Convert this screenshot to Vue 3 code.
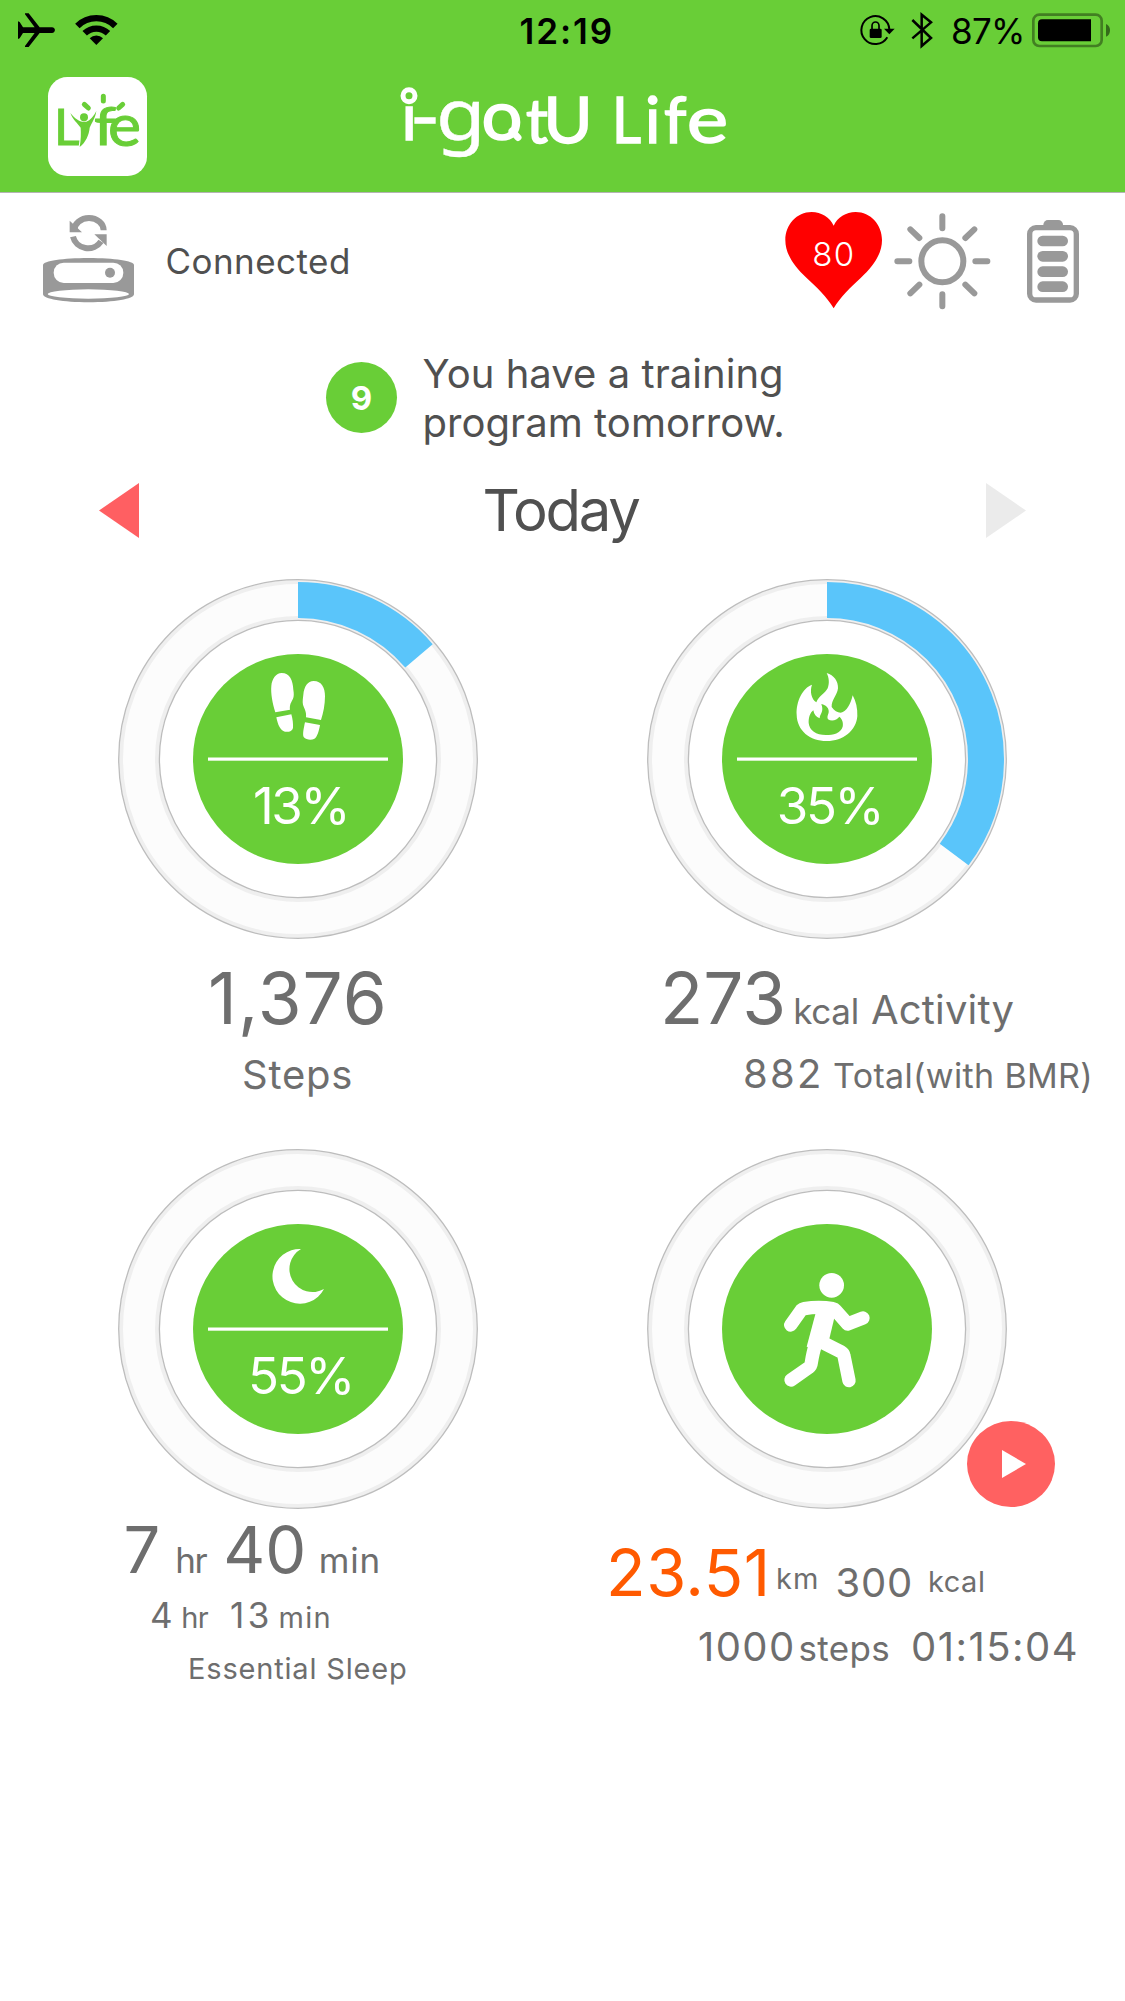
<template>
  <div class="app">
    <header class="header">
      <div class="status-bar">
        <div class="status-left">
          <svg class="plane" viewBox="54 38 112 104">
            <path d="M54 63l5 2 10 16h35L75 42v-3h11l33 42h37c12 0 12 17 0 17h-37l-33 42H75v-3l29-39H69l-10 16-5 2z" />
          </svg>
          <svg class="wifi" viewBox="224 42 128 94">
            <path d="M288 135l-20-20a28 28 0 0 1 40 0z" />
            <path class="line" stroke-width="19" d="M231 78a81 81 0 0 1 114 0M253 100a50 50 0 0 1 70 0" />
          </svg>
        </div>
        <span class="clock">12:19</span>
        <div class="status-right">
          <svg class="lock" viewBox="328 42 104 94">
            <path class="line" stroke-width="6" d="M410 112a42 42 0 1 1 6-24" />
            <path d="M400 86h32l-16 17z" />
            <rect x="357" y="86" width="36" height="28" rx="4" />
            <path class="line" stroke-width="5" d="M364 88V77a10.500 11 0 0 1 21 0v11" />
          </svg>
          <svg class="bluetooth" viewBox="484 34 68 114">
            <path class="line" stroke-width="7.500" d="M488 61l56 54-28 24V45l28 23-56 48" />
          </svg>
          <span class="charge">87%</span>
          <svg class="phone-battery" viewBox="846 38 236 104">
            <rect x="850" y="43" width="205" height="94" rx="18" class="line shade" stroke-width="8" />
            <path d="M876 57h147v66H876q-12 0-12-12V69q0-12 12-12z" />
            <path class="nub" d="M1068 71c16 6 16 32 0 38z" />
          </svg>
        </div>
      </div>

      <div class="title-bar">
        <svg class="app-icon" viewBox="144 231 297 297">
          <rect x="144" y="231" width="297" height="297" rx="58" fill="#fff" />
          <g class="app-icon-text">
            <text x="162" y="436" font-size="153">L</text>
            <text x="282" y="436" font-size="156" textLength="66" lengthAdjust="spacingAndGlyphs">f</text>
            <text x="324" y="438" font-size="172" textLength="99" lengthAdjust="spacingAndGlyphs">e</text>
          </g>
          <path
            class="person"
            d="M211 339c14 17 26 25 36 26h12c12-4 22-16 30-32-3 22-14 36-20 50-2 22-12 44-30 58 4-22 4-42 3-58-8-12-23-23-31-44z"
          />
          <circle cx="252" cy="352" r="12" fill="#69ce37" />
          <path class="rays" d="M310 289v14M253 313l12 11M368 313l-12 11" />
        </svg>

        <svg class="logo" viewBox="400 85 335 80">
          <text x="401.400" y="139.500">i</text>
          <text x="410.500" y="140" textLength="29" lengthAdjust="spacingAndGlyphs">-</text>
          <text class="round" x="436" y="140" textLength="49.600" lengthAdjust="spacingAndGlyphs">g</text>
          <text x="481.500" y="139.500" font-size="70" textLength="41" lengthAdjust="spacingAndGlyphs">o</text>
          <text x="526" y="142.500" font-size="61">t</text>
          <text x="543.500" y="142.500" textLength="49" lengthAdjust="spacingAndGlyphs">U</text>
          <text x="612" y="142.500" textLength="29" lengthAdjust="spacingAndGlyphs">L</text>
          <text x="645" y="142.500">i</text>
          <text x="664" y="142.500">f</text>
          <text x="687" y="142.500" font-size="66" textLength="41" lengthAdjust="spacingAndGlyphs">e</text>
          <circle class="ring-dot" cx="409" cy="95.800" r="6" />
          <path class="tail" d="M512 131l6 6.500" />
        </svg>
      </div>
    </header>

    <section class="device-row">
      <svg class="device" viewBox="129 60 273 276">
        <path class="arc" d="M223 106a43 36 0 0 1 88 0M219 125a46 44 0 0 0 84 14" />
        <path d="M209 77v35h37zM320 118h-37l37 35z" />
        <path d="M129 210c0-12 60-21 137-21s136 9 136 21v88c0 14-60 24-136 24s-137-10-137-24z" />
        <rect x="161" y="203" width="209" height="61" rx="30" fill="#fff" />
        <circle cx="330" cy="233" r="15" />
        <ellipse cx="265" cy="297" rx="122" ry="14" fill="#fff" />
      </svg>
      <span class="connection">Connected</span>

      <div class="indicators">
        <svg class="heart" viewBox="105 50 291 296">
          <path
            d="M251 91C262 66 288 50 317 50c45 0 79 38 79 84 0 42-26 78-64 114-30 28-60 56-81 91-21-35-51-63-81-91C132 212 106 176 106 134c0-46 34-84 79-84 29 0 55 16 66 41z"
          />
          <text x="187" y="212">80</text>
        </svg>
        <svg class="sun" viewBox="431 53 290 290">
          <circle cx="576" cy="198" r="63" />
          <path
            d="M576 63v36M576 297v36M441 198h36M675 198h36M480 102l27 26M672 102l-27 26M480 294l27-26M672 294l-27-26"
          />
        </svg>
        <svg class="device-battery" viewBox="832 74 156 248">
          <rect x="881" y="74" width="59" height="30" rx="14" />
          <rect x="840" y="97" width="140" height="217" rx="19" class="case" />
          <rect v-for="y in [121, 167, 213, 258]" :key="y" x="863" :y="y" width="92" height="32" rx="16" />
        </svg>
      </div>
    </section>

    <section class="notice">
      <span class="badge">9</span>
      <p class="message">You have a training<br />program tomorrow.</p>
    </section>

    <nav class="day-nav">
      <svg class="arrow" viewBox="0 0 40 55"><path d="M40 0v55L0 27.500z" fill="#ff5f62" /></svg>
      <span class="day">Today</span>
      <svg class="arrow" viewBox="0 0 40 55"><path d="M0 0v55l40-27.500z" fill="#ebebeb" /></svg>
    </nav>

    <main class="metrics">
      <article v-for="m in metrics" :key="m.name" class="metric" :class="m.name">
        <div class="dial-wrap">
          <svg class="dial" viewBox="0 0 360 360">
            <circle cx="180" cy="180" r="159" stroke="#fcfcfc" stroke-width="40" />
            <circle cx="180" cy="180" r="177" stroke="#efefef" stroke-width="4" />
            <circle cx="180" cy="180" r="141" stroke="#efefef" stroke-width="4" />
            <circle cx="180" cy="180" r="179.300" stroke="#bdbdbd" stroke-width="1.300" />
            <circle cx="180" cy="180" r="138.600" stroke="#bdbdbd" stroke-width="1.300" />
            <circle
              v-if="m.progress"
              cx="180"
              cy="180"
              r="159"
              stroke="#5ac5fa"
              stroke-width="36"
              pathLength="100"
              :stroke-dasharray="`${m.progress} 100`"
              transform="rotate(-90 180 180)"
            />
            <circle cx="180" cy="180" r="105" class="core" />

            <g v-if="m.name === 'steps'" class="glyph" transform="translate(-18 -19) scale(.33333)">
              <path
                d="M545 339c24 0 34 22 35 50 2 12 2 20-1 27-5 10-11 18-9 33l-44 8c-9-28-14-58-12-79 2-22 14-39 31-39zM529 472l45-9c4 13 6 30 5 41-2 10-14 13-24 11-14-2-22-22-26-43z"
              />
              <path
                d="M641 363c24 0 34 20 34 46 0 26-5 50-12 71l-45-8c2-18-5-25-9-38-2-10 0-20 1-30 2-24 13-41 31-41zM615 487l45 8c-3 17-8 37-18 42-8 4-24 3-31-6-4-8 1-30 4-44z"
              />
            </g>
            <g v-else-if="m.name === 'calories'" class="glyph" transform="translate(-7 -19) scale(.33333)">
              <path
                d="M560 339c22 6 35 25 34 46-2 20-20 36-19 56 8 12 17 17 27 17 18-3 30-26 36-52 10 18 15 40 14 62-3 44-42 75-92 75s-89-31-90-79c-2-40 18-80 46-90-7 20-2 43 13 53 8-20 26-26 34-42 6-16 4-32-3-46z"
              />
              <path
                class="hollow"
                d="M544 432c15 3 24 14 22 25-1 8-6 12-2 21 12 8 27 2 34-8 10 8 12 20 10 30-6 20-28 25-50 25-30 0-50-14-52-36-1-16 5-32 14-38 2 12 8 20 19 24 0-14 14-18 5-43z"
              />
            </g>
            <g v-else-if="m.name === 'sleep'" class="glyph" transform="translate(-18 -9) scale(.33333)">
              <path d="M603 327a82 82 0 1 0 69 120a68 68 0 1 1-69-120z" />
            </g>
            <g v-else class="glyph" transform="translate(-7 -9) scale(.33333)">
              <circle cx="575" cy="436" r="37" />
              <path d="M528 515l58 6-18 75-28 34-40-10z" />
              <path
                class="limb"
                d="M452 555l32-45q3-3 9-4 44-8 85 0 6 1 9 5l36 41 46-18M530 600q-12 40-16 68-1 10-7 14l-54 38M552 610l52 26q7 4 8 12l15 74"
              />
            </g>

            <template v-if="m.percent">
              <rect x="90" y="178.500" width="180" height="3.200" fill="#fff" />
              <text x="182.500" y="245">{{ m.percent }}%</text>
            </template>
          </svg>
          <button v-if="m.name === 'track'" class="play">
            <svg viewBox="0 0 88 86"><path d="M35 29v28l24-14z" fill="#fff" /></svg>
          </button>
        </div>

        <div v-for="(row, i) in m.rows" :key="i" class="row" :class="'row-' + (i + 1)">
          <span v-for="(t, j) in row" :key="j" :class="t[1]">{{ t[0] }}</span>
        </div>
      </article>
    </main>
  </div>
</template>

<script setup>
import { ref } from 'vue'

// each row is a list of [text, class]
const metrics = ref([
  {
    name: 'steps',
    progress: 13.76,
    percent: 13,
    rows: [[['1,376', 'big']], [['Steps', 'medium']]]
  },
  {
    name: 'calories',
    progress: 35.25,
    percent: 35,
    rows: [
      [['273', 'big'], ['kcal', 'unit'], ['Activity', 'medium label']],
      [['882', 'medium'], ['Total(with BMR)', 'caption']]
    ]
  },
  {
    name: 'sleep',
    progress: 0,
    percent: 55,
    rows: [
      [['7', 'large'], ['hr', 'unit hour'], ['40', 'large minutes'], ['min', 'unit minute']],
      [['4', 'normal'], ['hr', 'small hour'], ['13', 'normal minutes'], ['min', 'small minute']],
      [['Essential Sleep', 'small']]
    ]
  },
  {
    name: 'track',
    progress: 0,
    percent: null,
    rows: [
      [['23.51', 'large distance'], ['km', 'small km'], ['300', 'medium energy'], ['kcal', 'small kcal']],
      [['1000', 'medium count'], ['steps', 'unit'], ['01:15:04', 'medium duration']]
    ]
  }
])
</script>

<style>
body {
  background: #fff;
}
</style>

<style scoped>
.app {
  width: 1125px;
  height: 2001px;
  overflow: hidden;
  background: #fff;
  color: #505050;
  font-family: 'Inter', 'Liberation Sans', sans-serif;
}

svg {
  display: block;
  flex: none;
  overflow: visible;
}

span {
  white-space: nowrap;
}

.header {
  height: 192px;
  background: #69ce37;
  border-bottom: 1px solid #b4b4b4;
}

.status-bar {
  display: grid;
  grid-template-columns: 501.5px auto 1fr;
  align-items: center;
  height: 60px;
  padding: 0 14.3px 0 18px;
  color: #000;
  font-size: 35px;
  line-height: 1;
}

.status-left,
.status-right {
  display: flex;
  align-items: center;
}

.status-right {
  justify-content: flex-end;
}

.line {
  fill: none;
  stroke: #000;
}

.shade {
  stroke: #427f22;
}

.nub {
  fill: #346b1a;
}

.plane {
  width: 37.3px;
  height: 34.7px;
}

.wifi {
  width: 42.7px;
  height: 31.3px;
  margin-left: 19.3px;
}

.clock {
  font-weight: 600;
  letter-spacing: 1.9px;
  padding-top: 3px;
}

.lock {
  width: 34.7px;
  height: 31.3px;
}

.bluetooth {
  width: 22.7px;
  height: 38px;
  margin: 0 17px;
}

.charge {
  letter-spacing: -0.7px;
  padding-top: 3px;
  margin-right: 7.3px;
}

.phone-battery {
  width: 78.7px;
  height: 34.7px;
}

.title-bar {
  display: flex;
  align-items: flex-start;
  padding: 17px 0 0 48px;
}

.app-icon {
  width: 99px;
  height: 99px;
}

.app-icon-text {
  fill: #69ce37;
  stroke: #69ce37;
  stroke-width: 3px;
  font-family: 'Lato', sans-serif;
}

.person {
  fill: #69ce37;
  stroke: #fff;
  stroke-width: 6;
  paint-order: stroke;
}

.rays {
  fill: none;
  stroke: #69ce37;
  stroke-width: 15;
  stroke-linecap: round;
}

.logo {
  width: 335px;
  height: 80px;
  margin: 8px 0 0 253px;
  fill: #fff;
  stroke: #fff;
  stroke-width: 1.6px;
  font-family: 'Lato', sans-serif;
  font-size: 64px;
}

.logo .round {
  font-family: 'Noto Sans', sans-serif;
  font-size: 71px;
  stroke-width: 0.4px;
}

.ring-dot {
  fill: #69ce37;
  stroke-width: 5px;
}

.tail {
  stroke-width: 7px;
  stroke-linecap: round;
}

.device-row {
  display: flex;
  align-items: center;
  height: 136px;
  padding: 0 45.7px 0 43px;
}

.device {
  width: 91px;
  height: 92px;
  fill: #999;
}

.arc {
  fill: none;
  stroke: #999;
  stroke-width: 18;
}

.connection {
  margin-left: 31.5px;
  font-size: 35px;
  line-height: 1;
  letter-spacing: 0.45px;
}

.indicators {
  display: flex;
  align-items: center;
  margin-left: auto;
}

.heart {
  width: 97px;
  height: 98.7px;
  fill: #f00;
}

.heart text {
  fill: #fff;
  font-size: 99px;
  font-weight: 350;
  letter-spacing: 4px;
}

.sun {
  width: 96.7px;
  height: 96.7px;
  margin: 0 37px 0 11.5px;
  fill: none;
  stroke: #999;
  stroke-width: 18;
  stroke-linecap: round;
}

.device-battery {
  width: 52px;
  height: 82.7px;
  fill: #999;
}

.case {
  fill: #fff;
  stroke: #999;
  stroke-width: 16;
}

.notice {
  display: flex;
  align-items: center;
  height: 98px;
  margin-top: 20px;
  padding-left: 326px;
}

.badge {
  width: 71px;
  margin-bottom: 2px;
  border-radius: 50%;
  background: #69ce37;
  color: #fff;
  font-size: 33px;
  font-weight: 700;
  line-height: 72px;
  height: 71px;
  text-align: center;
}

.message {
  margin: 0 0 0 25.5px;
  font-size: 40px;
  line-height: 49px;
  letter-spacing: 0.05px;
}

.day-nav {
  display: flex;
  align-items: center;
  justify-content: space-between;
  height: 58px;
  margin-top: 34px;
  padding: 0 99px;
}

.arrow {
  width: 40px;
  height: 55px;
}

.day {
  margin-right: 4px;
  font-size: 58px;
  line-height: 1;
  letter-spacing: -2.3px;
}

.metrics {
  display: grid;
  grid-template-columns: 562px 563px;
  grid-template-rows: 570px auto;
  margin-top: 40px;
  color: #6e6e6e;
}

.dial-wrap {
  position: relative;
  width: 360px;
  margin-left: 118px;
}

.calories .dial-wrap,
.track .dial-wrap {
  margin-left: 85px;
}

.dial {
  width: 360px;
  height: 360px;
  fill: none;
}

.dial .core,
.hollow {
  fill: #69ce37;
}

.dial text {
  fill: #fff;
  font-size: 51px;
  letter-spacing: -2.4px;
  text-anchor: middle;
}

.glyph {
  fill: #fff;
}

.limb {
  fill: none;
  stroke: #fff;
  stroke-width: 40;
  stroke-linecap: round;
  stroke-linejoin: round;
}

.play {
  position: absolute;
  left: 320px;
  top: 272px;
  width: 88px;
  height: 86px;
  padding: 0;
  border: 0;
  border-radius: 50%;
  background: #ff6161;
}

.row {
  display: flex;
  align-items: baseline;
  line-height: 1;
}

.big {
  font-size: 71px;
}

.large {
  font-size: 65px;
}

.medium {
  font-size: 40px;
}

.unit,
.normal {
  font-size: 35px;
}

.caption {
  font-size: 34px;
}

.small {
  font-size: 29px;
}

/* steps */
.steps .row-1 {
  margin: 24px 0 0 208px;
  letter-spacing: 1.1px;
}

.steps .row-2 {
  margin: 21px 0 0 242px;
  letter-spacing: 0.8px;
}

/* calories */
.calories .row-1 {
  margin: 24px 0 0 98px;
}

.calories .unit {
  margin-left: 7px;
  letter-spacing: -0.3px;
}

.calories .label {
  margin-left: 12px;
  letter-spacing: 0.2px;
}

.calories .row-2 {
  margin: 19.5px 0 0 181px;
  letter-spacing: 2.2px;
}

.calories .caption {
  margin-left: 9.5px;
  letter-spacing: 0.35px;
}

/* sleep */
.sleep .row-1 {
  margin: 8px 0 0 123.5px;
}

.sleep .row-1 .hour {
  margin-left: 15px;
  letter-spacing: -1.5px;
}

.sleep .row-1 .minutes {
  margin-left: 17px;
}

.sleep .row-1 .minute {
  margin-left: 12.5px;
  letter-spacing: 0.8px;
}

.sleep .row-2 {
  margin: 16px 0 0 150px;
}

.sleep .row-2 .hour {
  margin-left: 8.5px;
  letter-spacing: -0.6px;
}

.sleep .row-2 .minutes {
  margin-left: 22px;
  letter-spacing: 3.6px;
}

.sleep .row-2 .minute {
  margin-left: 5.5px;
  letter-spacing: 1.2px;
}

.sleep .row-3 {
  margin: 21px 0 0 188px;
  letter-spacing: 0.82px;
}

/* track */
.track .row-1 {
  align-items: flex-end;
  margin: 31px 0 0 44px;
}

.track .distance {
  color: #ff5a00;
  letter-spacing: 0.5px;
}

.track .km {
  margin: 0 0 12px 5.5px;
  letter-spacing: 1px;
}

.track .energy {
  margin: 0 0 2.5px 16px;
  letter-spacing: 0.8px;
}

.track .kcal {
  margin: 0 0 9px 15px;
  letter-spacing: 0.5px;
}

.track .row-2 {
  margin: 21.5px 0 0 136px;
}

.track .count {
  letter-spacing: 1.4px;
}

.track .unit {
  margin-left: 3px;
  letter-spacing: 0.3px;
}

.track .duration {
  margin-left: 21px;
  letter-spacing: 1.5px;
}
</style>
